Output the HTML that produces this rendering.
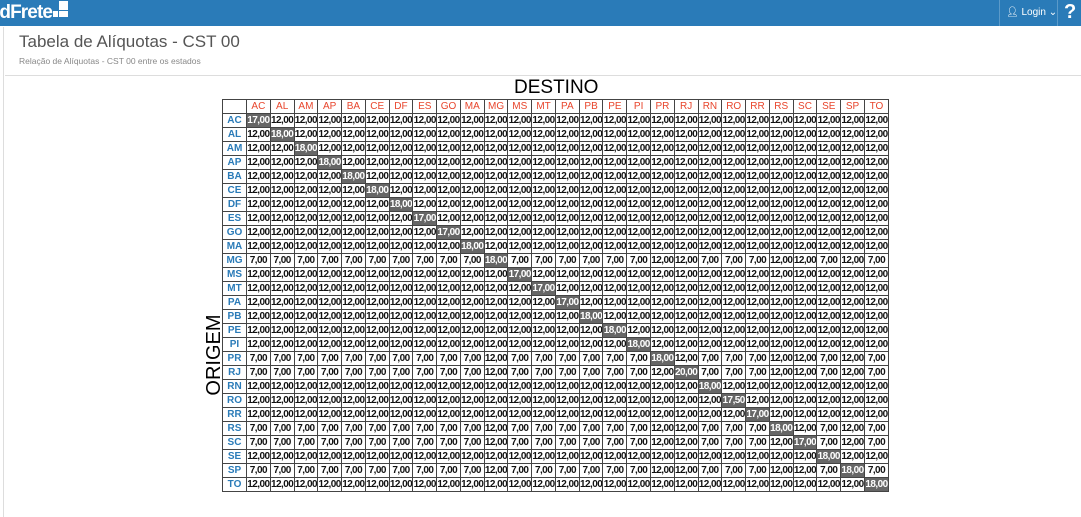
<!DOCTYPE html>
<html><head><meta charset="utf-8"><style>
body{margin:0;width:1081px;height:517px;overflow:hidden;background:#fff;font-family:"Liberation Sans",sans-serif;position:relative}
.top{position:absolute;left:0;top:0;width:1081px;height:26px;background:#2a7bb8}
.logo{position:absolute;left:-5px;top:2px;color:#fff;font-weight:bold;font-size:19px;letter-spacing:-0.9px}
.sq{position:absolute;background:#fff}
.sep{position:absolute;top:0;width:1px;height:26px;background:#5b9ac9}
.login{position:absolute;left:1006px;top:7px;color:#fff;font-size:10px}
.q{position:absolute;left:1064px;top:1px;color:#fff;font-weight:bold;font-size:20px}
.lv{position:absolute;left:3px;top:27px;width:1px;height:490px;background:#ddd}
.hl{position:absolute;left:5px;top:75px;width:1076px;height:1px;background:#ddd}
h1{position:absolute;left:19px;top:32px;margin:0;font-weight:normal;font-size:17px;color:#555}
.sub{position:absolute;left:19px;top:56px;font-size:8.5px;color:#888}
.dest{position:absolute;left:514px;top:77px;font-size:19px;color:#000}
.orig{position:absolute;left:169px;top:343px;font-size:20px;transform:rotate(-90deg);transform-origin:center;width:90px;text-align:center;line-height:24px}
table{position:absolute;left:222px;top:99px;border-collapse:collapse;table-layout:fixed;width:667px}
td,th{border:1px solid #444;height:13px;padding:0;text-align:center;font-size:10px;font-weight:bold;line-height:12px;letter-spacing:-0.55px;white-space:nowrap;overflow:hidden;color:#111}
th{color:#e8452c;font-weight:normal;letter-spacing:0}
th.r{color:#2a7bb8;font-weight:bold}
td.d{background:#666;color:#fff}
</style></head><body>
<div class="top">
<div class="logo">ldFrete</div>
<div class="sq" style="left:59px;top:1px;width:9px;height:9px"></div>
<div class="sq" style="left:59px;top:11px;width:9px;height:6px"></div>
<div class="sq" style="left:53px;top:11px;width:5px;height:6px"></div>
<div class="sep" style="left:999px"></div>
<div class="login">&#128100;&#xFE0E; Login &#8964;</div>
<div class="sep" style="left:1057px"></div>
<div class="q">?</div>
</div>
<div class="lv"></div>
<h1>Tabela de Alíquotas - CST 00</h1>
<div class="sub">Relação de Alíquotas - CST 00 entre os estados</div>
<div class="hl"></div>
<div class="dest">DESTINO</div>
<div class="orig">ORIGEM</div>
<table>
<colgroup><col style="width:24px"></colgroup>
<tr><th></th><th>AC<th>AL<th>AM<th>AP<th>BA<th>CE<th>DF<th>ES<th>GO<th>MA<th>MG<th>MS<th>MT<th>PA<th>PB<th>PE<th>PI<th>PR<th>RJ<th>RN<th>RO<th>RR<th>RS<th>SC<th>SE<th>SP<th>TO</tr>
<tr><th class=r>AC<td class=d>17,00<td>12,00<td>12,00<td>12,00<td>12,00<td>12,00<td>12,00<td>12,00<td>12,00<td>12,00<td>12,00<td>12,00<td>12,00<td>12,00<td>12,00<td>12,00<td>12,00<td>12,00<td>12,00<td>12,00<td>12,00<td>12,00<td>12,00<td>12,00<td>12,00<td>12,00<td>12,00</tr>
<tr><th class=r>AL<td>12,00<td class=d>18,00<td>12,00<td>12,00<td>12,00<td>12,00<td>12,00<td>12,00<td>12,00<td>12,00<td>12,00<td>12,00<td>12,00<td>12,00<td>12,00<td>12,00<td>12,00<td>12,00<td>12,00<td>12,00<td>12,00<td>12,00<td>12,00<td>12,00<td>12,00<td>12,00<td>12,00</tr>
<tr><th class=r>AM<td>12,00<td>12,00<td class=d>18,00<td>12,00<td>12,00<td>12,00<td>12,00<td>12,00<td>12,00<td>12,00<td>12,00<td>12,00<td>12,00<td>12,00<td>12,00<td>12,00<td>12,00<td>12,00<td>12,00<td>12,00<td>12,00<td>12,00<td>12,00<td>12,00<td>12,00<td>12,00<td>12,00</tr>
<tr><th class=r>AP<td>12,00<td>12,00<td>12,00<td class=d>18,00<td>12,00<td>12,00<td>12,00<td>12,00<td>12,00<td>12,00<td>12,00<td>12,00<td>12,00<td>12,00<td>12,00<td>12,00<td>12,00<td>12,00<td>12,00<td>12,00<td>12,00<td>12,00<td>12,00<td>12,00<td>12,00<td>12,00<td>12,00</tr>
<tr><th class=r>BA<td>12,00<td>12,00<td>12,00<td>12,00<td class=d>18,00<td>12,00<td>12,00<td>12,00<td>12,00<td>12,00<td>12,00<td>12,00<td>12,00<td>12,00<td>12,00<td>12,00<td>12,00<td>12,00<td>12,00<td>12,00<td>12,00<td>12,00<td>12,00<td>12,00<td>12,00<td>12,00<td>12,00</tr>
<tr><th class=r>CE<td>12,00<td>12,00<td>12,00<td>12,00<td>12,00<td class=d>18,00<td>12,00<td>12,00<td>12,00<td>12,00<td>12,00<td>12,00<td>12,00<td>12,00<td>12,00<td>12,00<td>12,00<td>12,00<td>12,00<td>12,00<td>12,00<td>12,00<td>12,00<td>12,00<td>12,00<td>12,00<td>12,00</tr>
<tr><th class=r>DF<td>12,00<td>12,00<td>12,00<td>12,00<td>12,00<td>12,00<td class=d>18,00<td>12,00<td>12,00<td>12,00<td>12,00<td>12,00<td>12,00<td>12,00<td>12,00<td>12,00<td>12,00<td>12,00<td>12,00<td>12,00<td>12,00<td>12,00<td>12,00<td>12,00<td>12,00<td>12,00<td>12,00</tr>
<tr><th class=r>ES<td>12,00<td>12,00<td>12,00<td>12,00<td>12,00<td>12,00<td>12,00<td class=d>17,00<td>12,00<td>12,00<td>12,00<td>12,00<td>12,00<td>12,00<td>12,00<td>12,00<td>12,00<td>12,00<td>12,00<td>12,00<td>12,00<td>12,00<td>12,00<td>12,00<td>12,00<td>12,00<td>12,00</tr>
<tr><th class=r>GO<td>12,00<td>12,00<td>12,00<td>12,00<td>12,00<td>12,00<td>12,00<td>12,00<td class=d>17,00<td>12,00<td>12,00<td>12,00<td>12,00<td>12,00<td>12,00<td>12,00<td>12,00<td>12,00<td>12,00<td>12,00<td>12,00<td>12,00<td>12,00<td>12,00<td>12,00<td>12,00<td>12,00</tr>
<tr><th class=r>MA<td>12,00<td>12,00<td>12,00<td>12,00<td>12,00<td>12,00<td>12,00<td>12,00<td>12,00<td class=d>18,00<td>12,00<td>12,00<td>12,00<td>12,00<td>12,00<td>12,00<td>12,00<td>12,00<td>12,00<td>12,00<td>12,00<td>12,00<td>12,00<td>12,00<td>12,00<td>12,00<td>12,00</tr>
<tr><th class=r>MG<td>7,00<td>7,00<td>7,00<td>7,00<td>7,00<td>7,00<td>7,00<td>7,00<td>7,00<td>7,00<td class=d>18,00<td>7,00<td>7,00<td>7,00<td>7,00<td>7,00<td>7,00<td>12,00<td>12,00<td>7,00<td>7,00<td>7,00<td>12,00<td>12,00<td>7,00<td>12,00<td>7,00</tr>
<tr><th class=r>MS<td>12,00<td>12,00<td>12,00<td>12,00<td>12,00<td>12,00<td>12,00<td>12,00<td>12,00<td>12,00<td>12,00<td class=d>17,00<td>12,00<td>12,00<td>12,00<td>12,00<td>12,00<td>12,00<td>12,00<td>12,00<td>12,00<td>12,00<td>12,00<td>12,00<td>12,00<td>12,00<td>12,00</tr>
<tr><th class=r>MT<td>12,00<td>12,00<td>12,00<td>12,00<td>12,00<td>12,00<td>12,00<td>12,00<td>12,00<td>12,00<td>12,00<td>12,00<td class=d>17,00<td>12,00<td>12,00<td>12,00<td>12,00<td>12,00<td>12,00<td>12,00<td>12,00<td>12,00<td>12,00<td>12,00<td>12,00<td>12,00<td>12,00</tr>
<tr><th class=r>PA<td>12,00<td>12,00<td>12,00<td>12,00<td>12,00<td>12,00<td>12,00<td>12,00<td>12,00<td>12,00<td>12,00<td>12,00<td>12,00<td class=d>17,00<td>12,00<td>12,00<td>12,00<td>12,00<td>12,00<td>12,00<td>12,00<td>12,00<td>12,00<td>12,00<td>12,00<td>12,00<td>12,00</tr>
<tr><th class=r>PB<td>12,00<td>12,00<td>12,00<td>12,00<td>12,00<td>12,00<td>12,00<td>12,00<td>12,00<td>12,00<td>12,00<td>12,00<td>12,00<td>12,00<td class=d>18,00<td>12,00<td>12,00<td>12,00<td>12,00<td>12,00<td>12,00<td>12,00<td>12,00<td>12,00<td>12,00<td>12,00<td>12,00</tr>
<tr><th class=r>PE<td>12,00<td>12,00<td>12,00<td>12,00<td>12,00<td>12,00<td>12,00<td>12,00<td>12,00<td>12,00<td>12,00<td>12,00<td>12,00<td>12,00<td>12,00<td class=d>18,00<td>12,00<td>12,00<td>12,00<td>12,00<td>12,00<td>12,00<td>12,00<td>12,00<td>12,00<td>12,00<td>12,00</tr>
<tr><th class=r>PI<td>12,00<td>12,00<td>12,00<td>12,00<td>12,00<td>12,00<td>12,00<td>12,00<td>12,00<td>12,00<td>12,00<td>12,00<td>12,00<td>12,00<td>12,00<td>12,00<td class=d>18,00<td>12,00<td>12,00<td>12,00<td>12,00<td>12,00<td>12,00<td>12,00<td>12,00<td>12,00<td>12,00</tr>
<tr><th class=r>PR<td>7,00<td>7,00<td>7,00<td>7,00<td>7,00<td>7,00<td>7,00<td>7,00<td>7,00<td>7,00<td>12,00<td>7,00<td>7,00<td>7,00<td>7,00<td>7,00<td>7,00<td class=d>18,00<td>12,00<td>7,00<td>7,00<td>7,00<td>12,00<td>12,00<td>7,00<td>12,00<td>7,00</tr>
<tr><th class=r>RJ<td>7,00<td>7,00<td>7,00<td>7,00<td>7,00<td>7,00<td>7,00<td>7,00<td>7,00<td>7,00<td>12,00<td>7,00<td>7,00<td>7,00<td>7,00<td>7,00<td>7,00<td>12,00<td class=d>20,00<td>7,00<td>7,00<td>7,00<td>12,00<td>12,00<td>7,00<td>12,00<td>7,00</tr>
<tr><th class=r>RN<td>12,00<td>12,00<td>12,00<td>12,00<td>12,00<td>12,00<td>12,00<td>12,00<td>12,00<td>12,00<td>12,00<td>12,00<td>12,00<td>12,00<td>12,00<td>12,00<td>12,00<td>12,00<td>12,00<td class=d>18,00<td>12,00<td>12,00<td>12,00<td>12,00<td>12,00<td>12,00<td>12,00</tr>
<tr><th class=r>RO<td>12,00<td>12,00<td>12,00<td>12,00<td>12,00<td>12,00<td>12,00<td>12,00<td>12,00<td>12,00<td>12,00<td>12,00<td>12,00<td>12,00<td>12,00<td>12,00<td>12,00<td>12,00<td>12,00<td>12,00<td class=d>17,50<td>12,00<td>12,00<td>12,00<td>12,00<td>12,00<td>12,00</tr>
<tr><th class=r>RR<td>12,00<td>12,00<td>12,00<td>12,00<td>12,00<td>12,00<td>12,00<td>12,00<td>12,00<td>12,00<td>12,00<td>12,00<td>12,00<td>12,00<td>12,00<td>12,00<td>12,00<td>12,00<td>12,00<td>12,00<td>12,00<td class=d>17,00<td>12,00<td>12,00<td>12,00<td>12,00<td>12,00</tr>
<tr><th class=r>RS<td>7,00<td>7,00<td>7,00<td>7,00<td>7,00<td>7,00<td>7,00<td>7,00<td>7,00<td>7,00<td>12,00<td>7,00<td>7,00<td>7,00<td>7,00<td>7,00<td>7,00<td>12,00<td>12,00<td>7,00<td>7,00<td>7,00<td class=d>18,00<td>12,00<td>7,00<td>12,00<td>7,00</tr>
<tr><th class=r>SC<td>7,00<td>7,00<td>7,00<td>7,00<td>7,00<td>7,00<td>7,00<td>7,00<td>7,00<td>7,00<td>12,00<td>7,00<td>7,00<td>7,00<td>7,00<td>7,00<td>7,00<td>12,00<td>12,00<td>7,00<td>7,00<td>7,00<td>12,00<td class=d>17,00<td>7,00<td>12,00<td>7,00</tr>
<tr><th class=r>SE<td>12,00<td>12,00<td>12,00<td>12,00<td>12,00<td>12,00<td>12,00<td>12,00<td>12,00<td>12,00<td>12,00<td>12,00<td>12,00<td>12,00<td>12,00<td>12,00<td>12,00<td>12,00<td>12,00<td>12,00<td>12,00<td>12,00<td>12,00<td>12,00<td class=d>18,00<td>12,00<td>12,00</tr>
<tr><th class=r>SP<td>7,00<td>7,00<td>7,00<td>7,00<td>7,00<td>7,00<td>7,00<td>7,00<td>7,00<td>7,00<td>12,00<td>7,00<td>7,00<td>7,00<td>7,00<td>7,00<td>7,00<td>12,00<td>12,00<td>7,00<td>7,00<td>7,00<td>12,00<td>12,00<td>7,00<td class=d>18,00<td>7,00</tr>
<tr><th class=r>TO<td>12,00<td>12,00<td>12,00<td>12,00<td>12,00<td>12,00<td>12,00<td>12,00<td>12,00<td>12,00<td>12,00<td>12,00<td>12,00<td>12,00<td>12,00<td>12,00<td>12,00<td>12,00<td>12,00<td>12,00<td>12,00<td>12,00<td>12,00<td>12,00<td>12,00<td>12,00<td class=d>18,00</tr>
</table>
</body></html>
